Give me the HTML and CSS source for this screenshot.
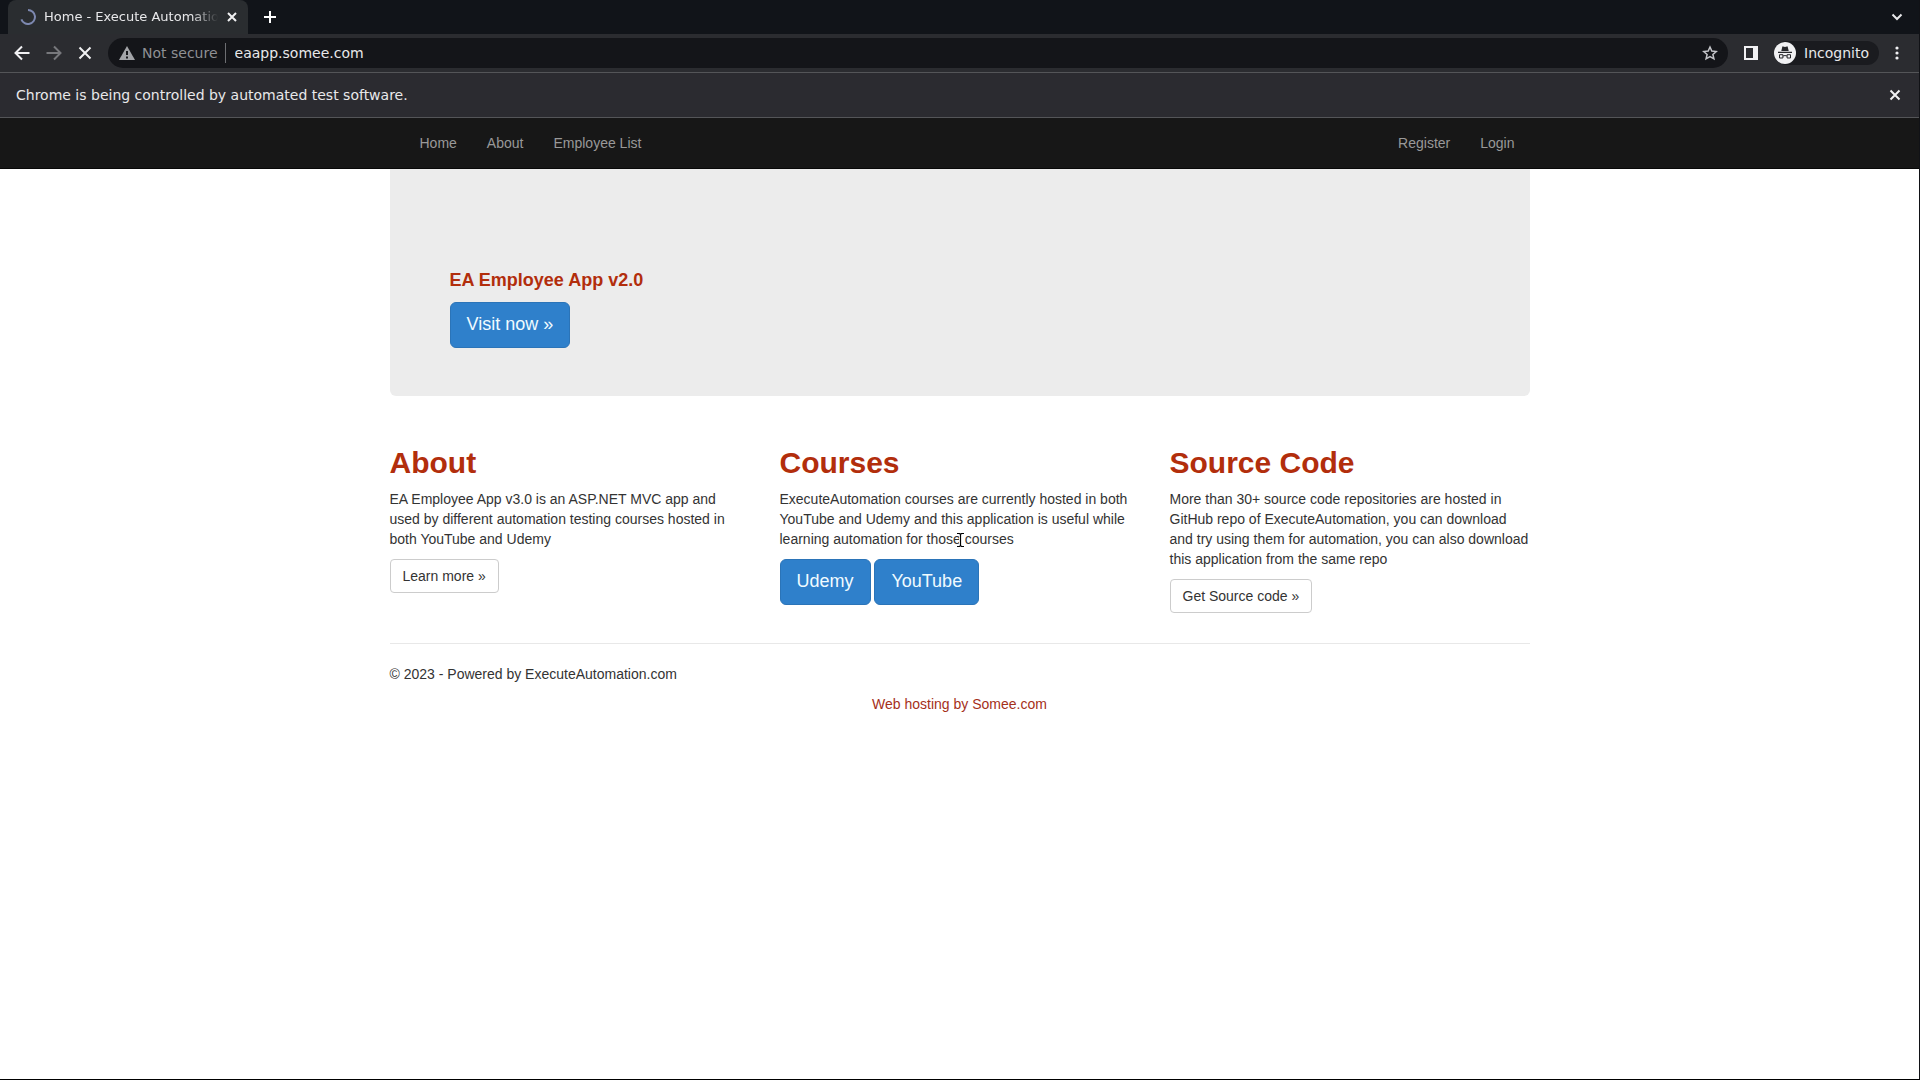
FILE: index.html
```html
<!DOCTYPE html>
<html lang="en">
<head>
    <meta charset="UTF-8">
    <meta name="viewport" content="width=device-width, initial-scale=1.0">
    <title>Home - Execute Automation</title>
    <link rel="stylesheet" href="styles.css">
</head>
<body>
    <div class="window">
        <div class="tabs">
            <div class="tab">
                <svg class="spinner" width="16" height="16" viewBox="0 0 16 16"><path d="M8 1a7 7 0 1 1-6.6 9.4" fill="none" stroke="#7d88b0" stroke-width="2"/></svg>
                <span class="tab-title">Home - Execute Automation</span>
                <button type="button" class="icon-btn" aria-label="Close tab">
                    <svg width="10" height="10" viewBox="0 0 10 10"><path d="M1 1l8 8M9 1l-8 8" stroke="#f1f1f3" stroke-width="2"/></svg>
                </button>
            </div>
            <button type="button" class="icon-btn new-tab" aria-label="New tab">
                <svg width="12" height="12" viewBox="0 0 12 12"><path d="M6 0v12M0 6h12" stroke="#fff" stroke-width="2"/></svg>
            </button>
            <button type="button" class="icon-btn tab-search" aria-label="Search tabs">
                <svg width="12" height="8" viewBox="0 0 12 8"><path d="M1.500 1.500l4.500 4.500 4.500-4.500" fill="none" stroke="#e8e8ea" stroke-width="2"/></svg>
            </button>
        </div>

        <div class="toolbar">
            <button type="button" class="icon-btn" aria-label="Back">
                <svg width="16" height="16" viewBox="0 0 16 16"><path d="M15.500 8H2M8 1.500L1.500 8 8 14.500" fill="none" stroke="#f1f1f3" stroke-width="2"/></svg>
            </button>
            <button type="button" class="icon-btn" aria-label="Forward">
                <svg width="16" height="16" viewBox="0 0 16 16"><path d="M.5 8H14M8 1.500L14.500 8 8 14.500" fill="none" stroke="#77787c" stroke-width="2"/></svg>
            </button>
            <button type="button" class="icon-btn" aria-label="Stop">
                <svg width="14" height="14" viewBox="0 0 14 14"><path d="M1.500 1.500l11 11M12.500 1.500l-11 11" stroke="#f1f1f3" stroke-width="2"/></svg>
            </button>
            <div class="address">
                <svg width="16" height="14" viewBox="0 0 16 14"><path d="M8 0l8 14H0z" fill="#a3a4a8"/><path d="M8 5v4M8 10.500v2" stroke="#16171b" stroke-width="2"/></svg>
                <span class="not-secure">Not secure</span>
                <input type="text" class="url" value="eaapp.somee.com" aria-label="Address" spellcheck="false">
                <button type="button" class="icon-btn" aria-label="Bookmark this page">
                    <svg width="16" height="16" viewBox="0 0 16 16"><path d="M8 2l1.800 4.100 4.400.4-3.300 2.900 1 4.400L8 11.500l-3.900 2.300 1-4.400-3.300-2.900 4.400-.4z" fill="none" stroke="#c4c5c9" stroke-width="1.500"/></svg>
                </button>
            </div>
            <button type="button" class="icon-btn side-panel" aria-label="Side panel">
                <svg width="14" height="14" viewBox="0 0 14 14"><path d="M0 0h14v14H0zM2 2v10h7V2z" fill="#f1f1f3" fill-rule="evenodd"/></svg>
            </button>
            <div class="incognito">
                <svg width="22" height="22" viewBox="0 0 22 22"><circle cx="11" cy="11" r="11" fill="#f1f1f3"/><path d="M7.300 9l1-4.200q.2-.6.800-.4l1.900.5 1.900-.5q.6-.2.800.4l1 4.200zM4 9.700h14v1.300H4z" fill="#26272b"/><path d="M5.500 12.700h3.400v3.300H5.500zM13.100 12.700h3.400v3.300h-3.400zM8.900 14q2.100-.9 4.200 0" fill="none" stroke="#26272b" stroke-width="1"/></svg>
                <span>Incognito</span>
            </div>
            <button type="button" class="icon-btn menu" aria-label="Menu">
                <svg width="4" height="14" viewBox="0 0 4 14"><g fill="#f1f1f3"><circle cx="2" cy="2" r="1.600"/><circle cx="2" cy="7" r="1.600"/><circle cx="2" cy="12" r="1.600"/></g></svg>
            </button>
        </div>

        <div class="infobar">
            <span>Chrome is being controlled by automated test software.</span>
            <button type="button" class="icon-btn" aria-label="Dismiss">
                <svg width="12" height="12" viewBox="0 0 12 12"><path d="M1.500 1.500l9 9M10.500 1.500l-9 9" stroke="#f1f1f3" stroke-width="2"/></svg>
            </button>
        </div>

        <div class="page">
            <nav class="navbar">
                <div class="container nav-links">
                    <a href="#">Home</a>
                    <a href="#">About</a>
                    <a href="#">Employee List</a>
                    <a href="#" class="register">Register</a>
                    <a href="#">Login</a>
                </div>
            </nav>

            <main class="container">
                <section class="hero">
                    <h4>EA Employee App v2.0</h4>
                    <a href="#" class="btn btn-primary">Visit now »</a>
                </section>

                <div class="row">
                    <section>
                        <h2>About</h2>
                        <p>EA Employee App v3.0 is an ASP.NET MVC app and used by different automation testing courses hosted in both YouTube and Udemy</p>
                        <a href="#" class="btn">Learn more »</a>
                    </section>
                    <section>
                        <h2>Courses</h2>
                        <p>ExecuteAutomation courses are currently hosted in both YouTube and Udemy and this application is useful while learning automation for those courses</p>
                        <a href="#" class="btn btn-primary">Udemy</a>
                        <a href="#" class="btn btn-primary">YouTube</a>
                    </section>
                    <section>
                        <h2>Source Code</h2>
                        <p>More than 30+ source code repositories are hosted in GitHub repo of ExecuteAutomation, you can download and try using them for automation, you can also download this application from the same repo</p>
                        <a href="#" class="btn">Get Source code »</a>
                    </section>
                </div>

                <hr>
                <footer>
                    <p>© 2023 - Powered by ExecuteAutomation.com</p>
                </footer>
            </main>
            <div class="hosting"><a href="#">Web hosting by Somee.com</a></div>
        </div>

        <!-- text cursor -->
        <svg class="cursor" width="9" height="16" viewBox="0 0 9 16"><path d="M1 1.500h2.500l1 1 1-1H8M4.500 2v12M1 14.500h2.500l1-1 1 1H8" fill="none" stroke="#fff" stroke-width="3"/><path d="M1 1.500h2.500l1 1 1-1H8M4.500 2v12M1 14.500h2.500l1-1 1 1H8" fill="none" stroke="#000" stroke-width="1.200"/></svg>
    </div>
</body>
</html>
```
FILE: styles.css
```css
* {
    box-sizing: border-box;
}

body {
    margin: 0;
    font-family: "Liberation Sans", Arial, sans-serif;
    font-size: 14px;
    line-height: 20px;
    color: #333;
    background: #fff;
}

.window {
    position: relative;
    display: flex;
    flex-direction: column;
    min-height: 100vh;
    border-right: 1px solid #111216;
    border-bottom: 1px solid #000;
}

/* browser bars */
.tabs,
.toolbar,
.infobar {
    display: flex;
    align-items: center;
    font-family: "DejaVu Sans", sans-serif;
    color: #e8e8ea;
}

.icon-btn {
    display: flex;
    align-items: center;
    justify-content: center;
    flex: none;
    padding: 0;
    border: none;
    background: none;
    cursor: pointer;
}

.tabs {
    height: 34px;
    padding: 0 16px 0 8px;
    background: #111419;
}

.tab {
    display: flex;
    align-items: center;
    width: 240px;
    height: 34px;
    padding: 0 11px 0 12px;
    border-radius: 8px 8px 0 0;
    background: #2a2d30;
    font-size: 13px;
}

.tab-title {
    flex: 1;
    margin: 0 9px 0 8px;
    overflow: hidden;
    white-space: nowrap;
    -webkit-mask-image: linear-gradient(to right, #000 85%, transparent);
    mask-image: linear-gradient(to right, #000 85%, transparent);
}

.new-tab {
    margin-left: 16px;
}

.tab-search {
    margin-left: auto;
}

.toolbar {
    height: 39px;
    padding: 0 20px 0 14px;
    gap: 16px;
    background: #2b2c30;
    border-bottom: 1px solid #545558;
}

.address {
    display: flex;
    align-items: center;
    flex: 1;
    height: 30px;
    padding: 0 10px 0 11px;
    border-radius: 15px;
    background: #141519;
    font-size: 14px;
}

.not-secure {
    margin-left: 7px;
    padding-right: 7px;
    border-right: 1px solid #6d6e72;
    color: #8f9094;
}

.url {
    flex: 1;
    min-width: 0;
    padding: 0 0 0 9px;
    border: none;
    outline: none;
    background: none;
    font: inherit;
    color: #e8e8ea;
}

.incognito {
    display: flex;
    align-items: center;
    gap: 8px;
    height: 24px;
    padding-right: 10px;
    border-radius: 12px;
    background: #1a1b1f;
    font-size: 14px;
}

.infobar {
    justify-content: space-between;
    height: 45px;
    padding: 0 18px 0 16px;
    background: #2b2b30;
    border-bottom: 1px solid #545558;
    font-size: 14px;
}

/* web page */
.page {
    flex: 1;
}

.container {
    width: 100%;
    max-width: 1170px;
    margin: 0 auto;
    padding: 0 15px;
}

.navbar {
    background: #171717;
    border-bottom: 1px solid #080808;
}

.nav-links {
    display: flex;
    padding-left: 30px;
}

.nav-links a {
    padding: 15px;
    color: #999;
    text-decoration: none;
}

.nav-links .register {
    margin-left: auto;
}

.hero {
    margin-bottom: 30px;
    padding: 101px 60px 48px;
    border-radius: 0 0 6px 6px;
    background: #ececec;
}

h2,
h4 {
    margin: 0 0 10px;
    color: #b22e0c;
}

h2 {
    font-size: 30px;
    line-height: 33px;
    margin-top: 20px;
}

h4 {
    margin-bottom: 12px;
    font-size: 18px;
    line-height: 20px;
}

p {
    margin: 0 0 10px;
}

.btn {
    display: inline-block;
    padding: 6px 12px;
    border: 1px solid #ccc;
    border-radius: 4px;
    background: #fff;
    color: #333;
    text-decoration: none;
    vertical-align: top;
}

.btn-primary {
    padding: 10px 16px 12px;
    border-color: #2b74b8;
    border-radius: 6px;
    background: #2f80cb;
    color: #f0fbff;
    font-size: 18px;
    line-height: 22px;
}

.row {
    display: grid;
    grid-template-columns: repeat(3, 1fr);
    gap: 30px;
}

.row section {
    padding-bottom: 10px;
}

hr {
    margin: 20px 0;
    border: 0;
    border-top: 1px solid #e8e8e8;
}

.hosting {
    text-align: center;
}

.hosting a {
    color: #a5301a;
    text-decoration: none;
}

.cursor {
    position: absolute;
    top: 532px;
    left: 956px;
}

@media (max-width: 800px) {
    .row {
        grid-template-columns: 1fr;
    }
}
```
